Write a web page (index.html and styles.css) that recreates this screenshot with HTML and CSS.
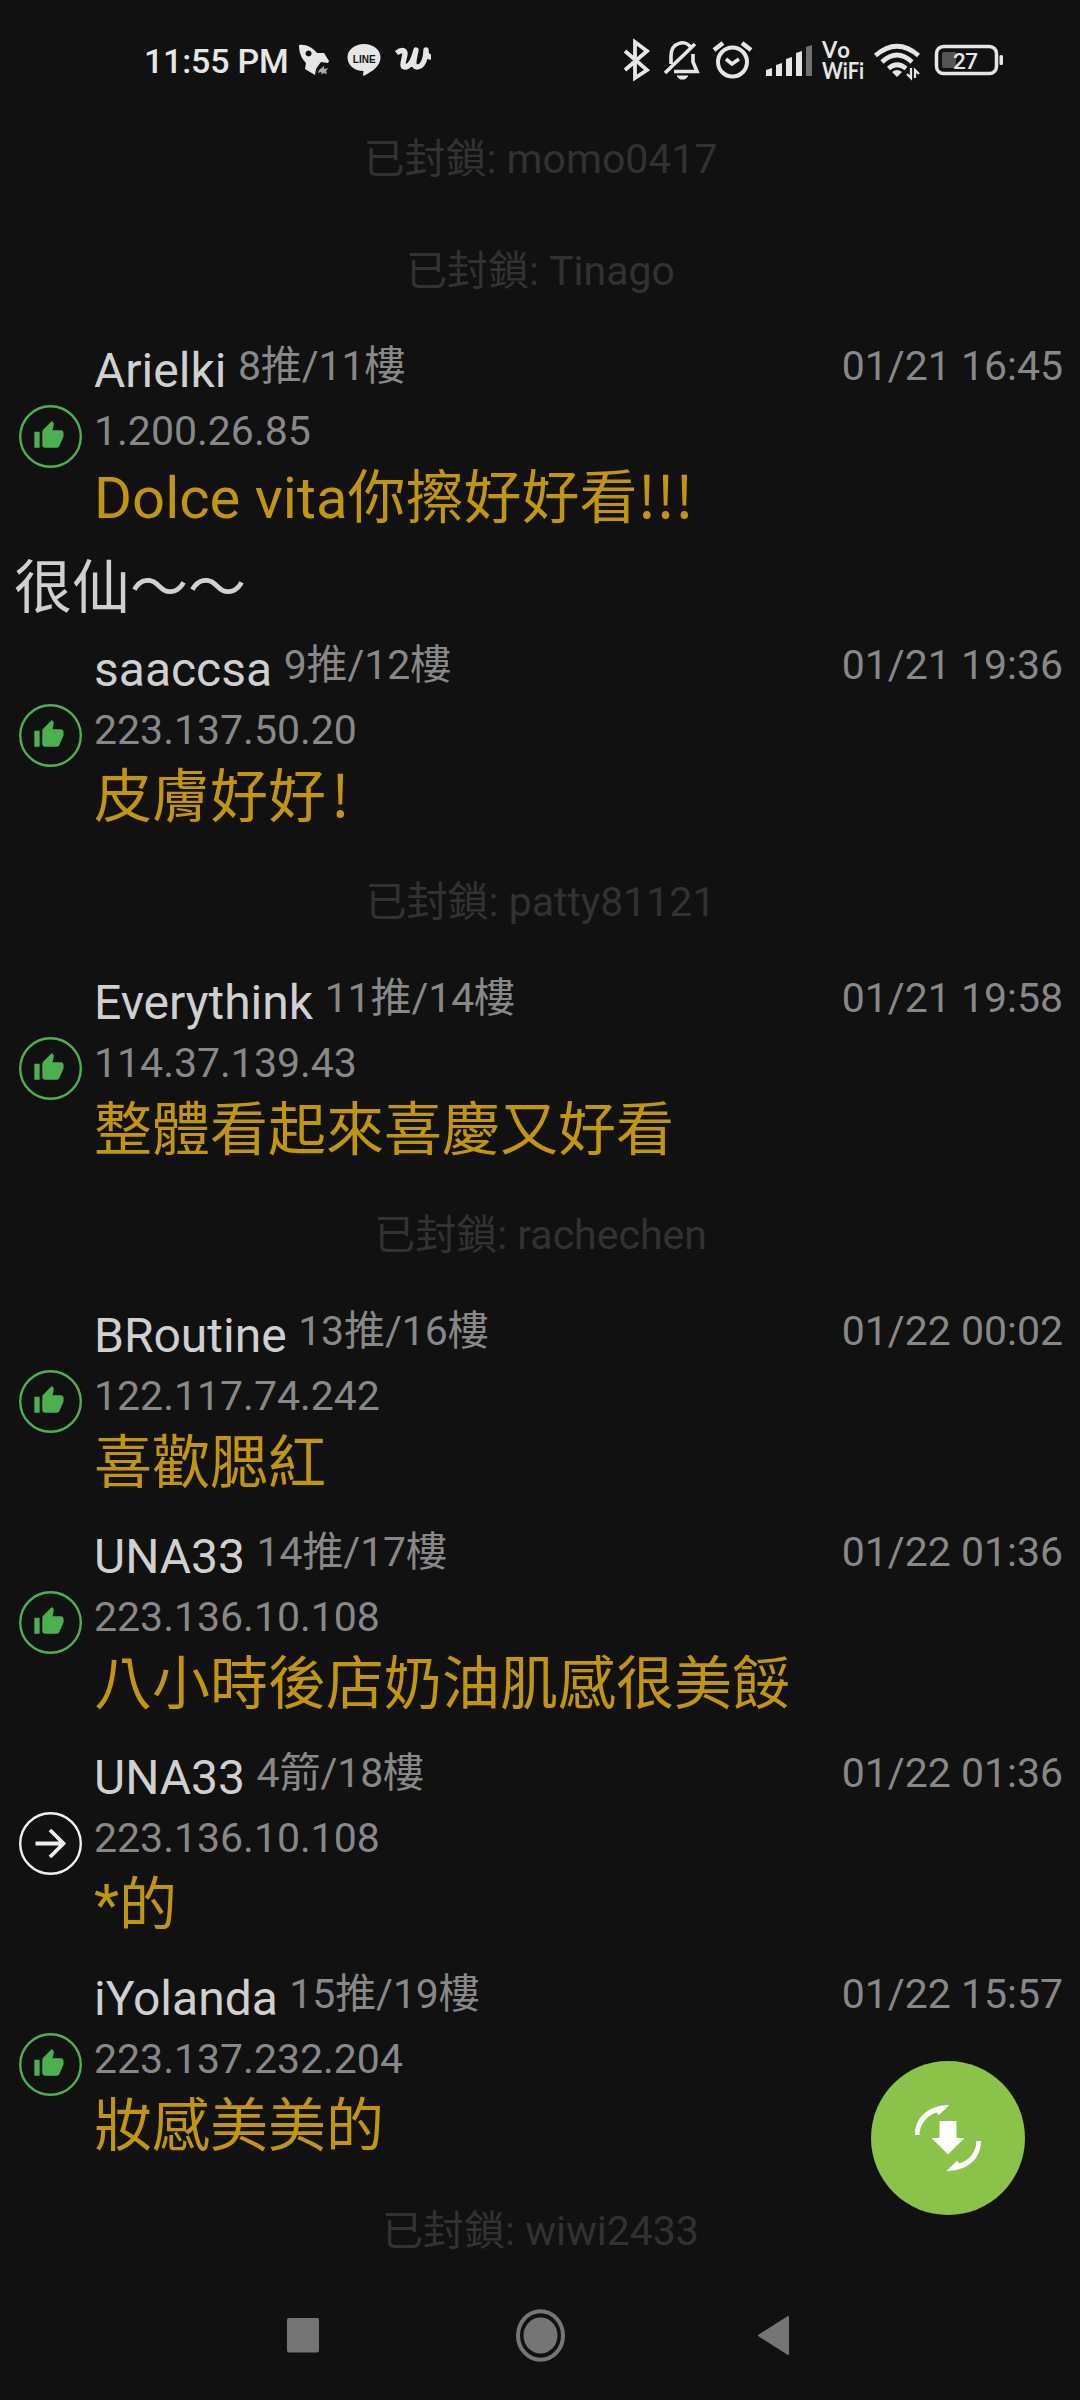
FILE: index.html
```html
<!DOCTYPE html>
<html lang="zh-Hant">
<head>
<meta charset="utf-8">
<title>推文</title>
<link rel="stylesheet" href="styles.css">
</head>
<body>
<svg class="defs" width="0" height="0">
  <symbol id="push" viewBox="0 0 63 63">
    <circle cx="31.5" cy="31.5" r="30.3" fill="none" stroke="#4caf50" stroke-width="2.4"/>
    <path transform="translate(14 14.7) scale(1.33)" fill="#4caf50" d="M1 21h4V9H1v12zm22-11c0-1.100-.9-2-2-2h-6.310l.95-4.570.03-.32c0-.410-.17-.790-.44-1.060L14.170 1 7.590 7.590C7.220 7.950 7 8.450 7 9v10c0 1.100.9 2 2 2h9c.830 0 1.540-.5 1.840-1.220l3.020-7.050c.09-.230.14-.470.14-.730v-2z"/>
  </symbol>
  <symbol id="arrow" viewBox="0 0 63 63">
    <circle cx="31.500" cy="31.500" r="30.300" fill="none" stroke="#f0f0f0" stroke-width="2.400"/>
    <path d="M16.500 31.500H44M31 18l13.500 13.500L31 45" fill="none" stroke="#f0f0f0" stroke-width="3.800"/>
  </symbol>
</svg>
<header class="status">
  <span class="clock">11:55 PM</span>
  <svg class="notices" viewBox="0 0 140 40">
    <path fill="#e6e6e6" fill-rule="evenodd" d="M1 4C8 3 14 6 19 12L26 12 31 20 30 22 23 21 20 25 18 28 17 34 7 28 8 22C3 17 1 11 1 4ZM10.500 9.500a3 3 0 1 0 .1 0Z"/>
    <path fill="#aaa" d="M21 29l5-4 0 3 4-1-2 3 1 3-4-1-1 2-1-3-3 1Z"/>
    <path fill="#e6e6e6" d="M66 3C75 3 82.500 8.500 82.500 16.500 82.500 25 74 31 65 35L65.500 30C56 30 49.500 24 49.500 16.500 49.500 8.500 57 3 66 3Z"/>
    <text x="54.700" y="21.700" textLength="23" class="line-logo">LINE</text>
    <path d="M98.500 12c4-3 9-4 8.500 1-1 6-4 13 0 13 6 0 9-9 11-17-2 9-4 17 1 17 6 0 9-9 9-17 0 3 1 7 5 7" fill="none" stroke="#e6e6e6" stroke-width="5.300" stroke-linejoin="round"/>
  </svg>
  <svg class="system" viewBox="0 0 400 60" fill="none" stroke="#e6e6e6">
    <path d="M5 21L27 40 15 48V12L27 21 5 40" stroke-width="3.800"/>
    <g stroke-width="3.600">
      <path d="M45 43L75 14M51 34V26C51 12 66 9 71 18M73 24V32L77 41.500H54"/>
      <path d="M57 46h11l-3 3h-5Z" fill="#e6e6e6" stroke-width="1"/>
      <circle cx="112.500" cy="32" r="14.500" stroke-width="4"/>
      <path d="M106 29l6 5 7-5"/>
      <path d="M94 20l9-7M131 20l-9-7" stroke-width="4.500"/>
    </g>
    <g fill="#e6e6e6" stroke="none">
      <path d="M146 40l6-2v8h-6ZM156 35l6-2v13h-6ZM166 29l6-2v19h-6ZM176 23l6-2v25h-6Z"/>
      <path d="M186 17l6-2v31h-6Z" fill="#707070"/>
      <text class="vo" x="202" y="27.500" textLength="28">Vo</text>
      <text class="vo" x="202" y="49" textLength="42" lengthAdjust="spacingAndGlyphs">WiFi</text>
    </g>
    <g stroke-width="4.600">
      <path d="M255.500 25.500Q277 7 298.500 25.500M262 32Q277 18 292 32M268.500 38.500Q277 31 286 38.500"/>
      <path d="M272 42q5-4 10 0l-5 5Z" fill="#e6e6e6" stroke="none"/>
      <path d="M291 38v10l-4-4M295 48V40l4 4" stroke-width="2.200"/>
    </g>
    <rect x="316.500" y="16.500" width="60" height="27" rx="7" stroke-width="3.500"/>
    <path d="M324 22h12v16h-12q-2 0-2-2v-12q0-2 2-2" fill="#555" stroke="none"/>
    <rect x="379.500" y="25" width="3.500" height="10" rx="1.500" fill="#e6e6e6" stroke="none"/>
    <text class="pct" x="333" y="38.500" textLength="25">27</text>
  </svg>
</header>
<main class="feed">
  <p class="blocked">已封鎖: momo0417</p>
  <p class="blocked">已封鎖: Tinago</p>
  <article class="row first">
    <svg class="mark"><use href="#push"/></svg>
    <div class="body">
      <div class="head"><span class="name">Arielki</span><span class="floor">8推/11樓</span><time>01/21 16:45</time></div>
      <div class="ip">1.200.26.85</div>
      <div class="msg">Dolce vita你擦好好看<span class="cjk">!!!</span></div>
    </div>
  </article>
  <p class="reply">很仙～～</p>
  <article class="row">
    <svg class="mark"><use href="#push"/></svg>
    <div class="body">
      <div class="head"><span class="name">saaccsa</span><span class="floor">9推/12樓</span><time>01/21 19:36</time></div>
      <div class="ip">223.137.50.20</div>
      <div class="msg">皮膚好好<span class="cjk mark-end">!</span></div>
    </div>
  </article>
  <p class="blocked">已封鎖: patty81121</p>
  <article class="row">
    <svg class="mark"><use href="#push"/></svg>
    <div class="body">
      <div class="head"><span class="name">Everythink</span><span class="floor">11推/14樓</span><time>01/21 19:58</time></div>
      <div class="ip">114.37.139.43</div>
      <div class="msg">整體看起來喜慶又好看</div>
    </div>
  </article>
  <p class="blocked">已封鎖: rachechen</p>
  <article class="row">
    <svg class="mark"><use href="#push"/></svg>
    <div class="body">
      <div class="head"><span class="name">BRoutine</span><span class="floor">13推/16樓</span><time>01/22 00:02</time></div>
      <div class="ip">122.117.74.242</div>
      <div class="msg">喜歡腮紅</div>
    </div>
  </article>
  <article class="row">
    <svg class="mark"><use href="#push"/></svg>
    <div class="body">
      <div class="head"><span class="name">UNA33</span><span class="floor">14推/17樓</span><time>01/22 01:36</time></div>
      <div class="ip">223.136.10.108</div>
      <div class="msg">八小時後店奶油肌感很美餒</div>
    </div>
  </article>
  <article class="row">
    <svg class="mark"><use href="#arrow"/></svg>
    <div class="body">
      <div class="head"><span class="name">UNA33</span><span class="floor">4箭/18樓</span><time>01/22 01:36</time></div>
      <div class="ip">223.136.10.108</div>
      <div class="msg">*的</div>
    </div>
  </article>
  <article class="row">
    <svg class="mark"><use href="#push"/></svg>
    <div class="body">
      <div class="head"><span class="name">iYolanda</span><span class="floor">15推/19樓</span><time>01/22 15:57</time></div>
      <div class="ip">223.137.232.204</div>
      <div class="msg">妝感美美的</div>
    </div>
  </article>
  <p class="blocked">已封鎖: wiwi2433</p>
</main>
<button class="fab" aria-label="更新">
  <svg viewBox="0 0 154 154" fill="#fff">
    <path d="M68.500 60h17v17h8L77 93.500 60.500 77h8Z"/>
    <path d="M44 74C44 56 58 44 78.500 44L68 54 65.500 51.500C55 55 48.500 64 48.500 74Z"/>
    <path d="M110 80C110 98 96 110 75.500 110L86 99.500 88.500 102.500C99 99 105.500 90 105.500 80Z"/>
  </svg>
</button>
<nav class="navbar">
  <svg viewBox="0 0 560 90" fill="#757575">
    <rect x="27" y="31" width="32" height="34.500" rx="2"/>
    <ellipse cx="280.500" cy="48.500" rx="17" ry="18"/>
    <ellipse cx="280.500" cy="48.500" rx="22.500" ry="24.200" fill="none" stroke="#757575" stroke-width="4"/>
    <path d="M499 48.500L528 30V67Z" stroke="#757575" stroke-width="2" stroke-linejoin="round"/>
  </svg>
</nav>
</body>
</html>
```
FILE: styles.css
```css
* { box-sizing: border-box; }
body {
  margin: 0;
  width: 1080px;
  height: 2400px;
  overflow: hidden;
  position: relative;
  display: flex;
  flex-direction: column;
  background: #111;
  font-family: Roboto, "Noto Sans CJK TC", sans-serif;
}
.defs { position: absolute; }
p { margin: 0; }
.status {
  height: 103px;
  padding: 30px 60px 13px 144px;
  display: flex;
  align-items: flex-start;
  color: #e6e6e6;
}
.clock {
  width: 154px;
  font-size: 34px;
  font-weight: 500;
  letter-spacing: -0.2px;
  line-height: 63px;
  white-space: nowrap;
}
.notices { width: 140px; height: 40px; margin-top: 11px; }
.system { width: 400px; height: 60px; margin-left: auto; }
.line-logo { font: 700 10px "Liberation Sans", sans-serif; fill: #111; }
.vo { font: 700 22px Lato, sans-serif; }
.pct { font: 500 22.5px Roboto, sans-serif; fill: #e6e6e6; stroke: none; }
.feed { height: 2181px; }
.blocked {
  height: 112px;
  line-height: 113px;
  text-align: center;
  font-size: 41px;
  padding-left: 1px;
  color: #323232;
}
.row { display: flex; height: 221px; }
.first { margin-top: -1px; }
.mark { width: 63px; height: 63px; margin: 79px 13px 0 19px; flex: none; }
.body { flex: 1; padding: 15px 17px 0 0; margin-left: -1px; }
.head { display: flex; height: 59px; line-height: 60px; }
.name { font-size: 48px; color: #d0d0d0; }
.floor, time { font-size: 41px; color: #888; line-height: 51px; }
.floor { margin-left: 11.5px; letter-spacing: -0.1px; }
time { margin-left: auto; }
.ip { font-size: 41px; line-height: 62px; color: #888; }
.msg { font-size: 58px; line-height: 73px; color: #c29511; }
.cjk { font-family: "Noto Sans CJK TC", sans-serif; line-height: 1; }
.mark-end { margin-left: 5px; }
.reply {
  height: 78px;
  padding: 14px 0 0 14px;
  font-size: 58px;
  line-height: 55px;
  color: #d0d0d0;
}
.fab {
  position: absolute;
  left: 871px;
  top: 2061px;
  width: 154px;
  height: 154px;
  padding: 0;
  border: 0;
  border-radius: 50%;
  background: #8bc34a;
}
.fab svg { display: block; width: 154px; height: 154px; }
.navbar { display: flex; justify-content: center; padding-top: 3px; }
.navbar svg { width: 560px; height: 90px; }
```
